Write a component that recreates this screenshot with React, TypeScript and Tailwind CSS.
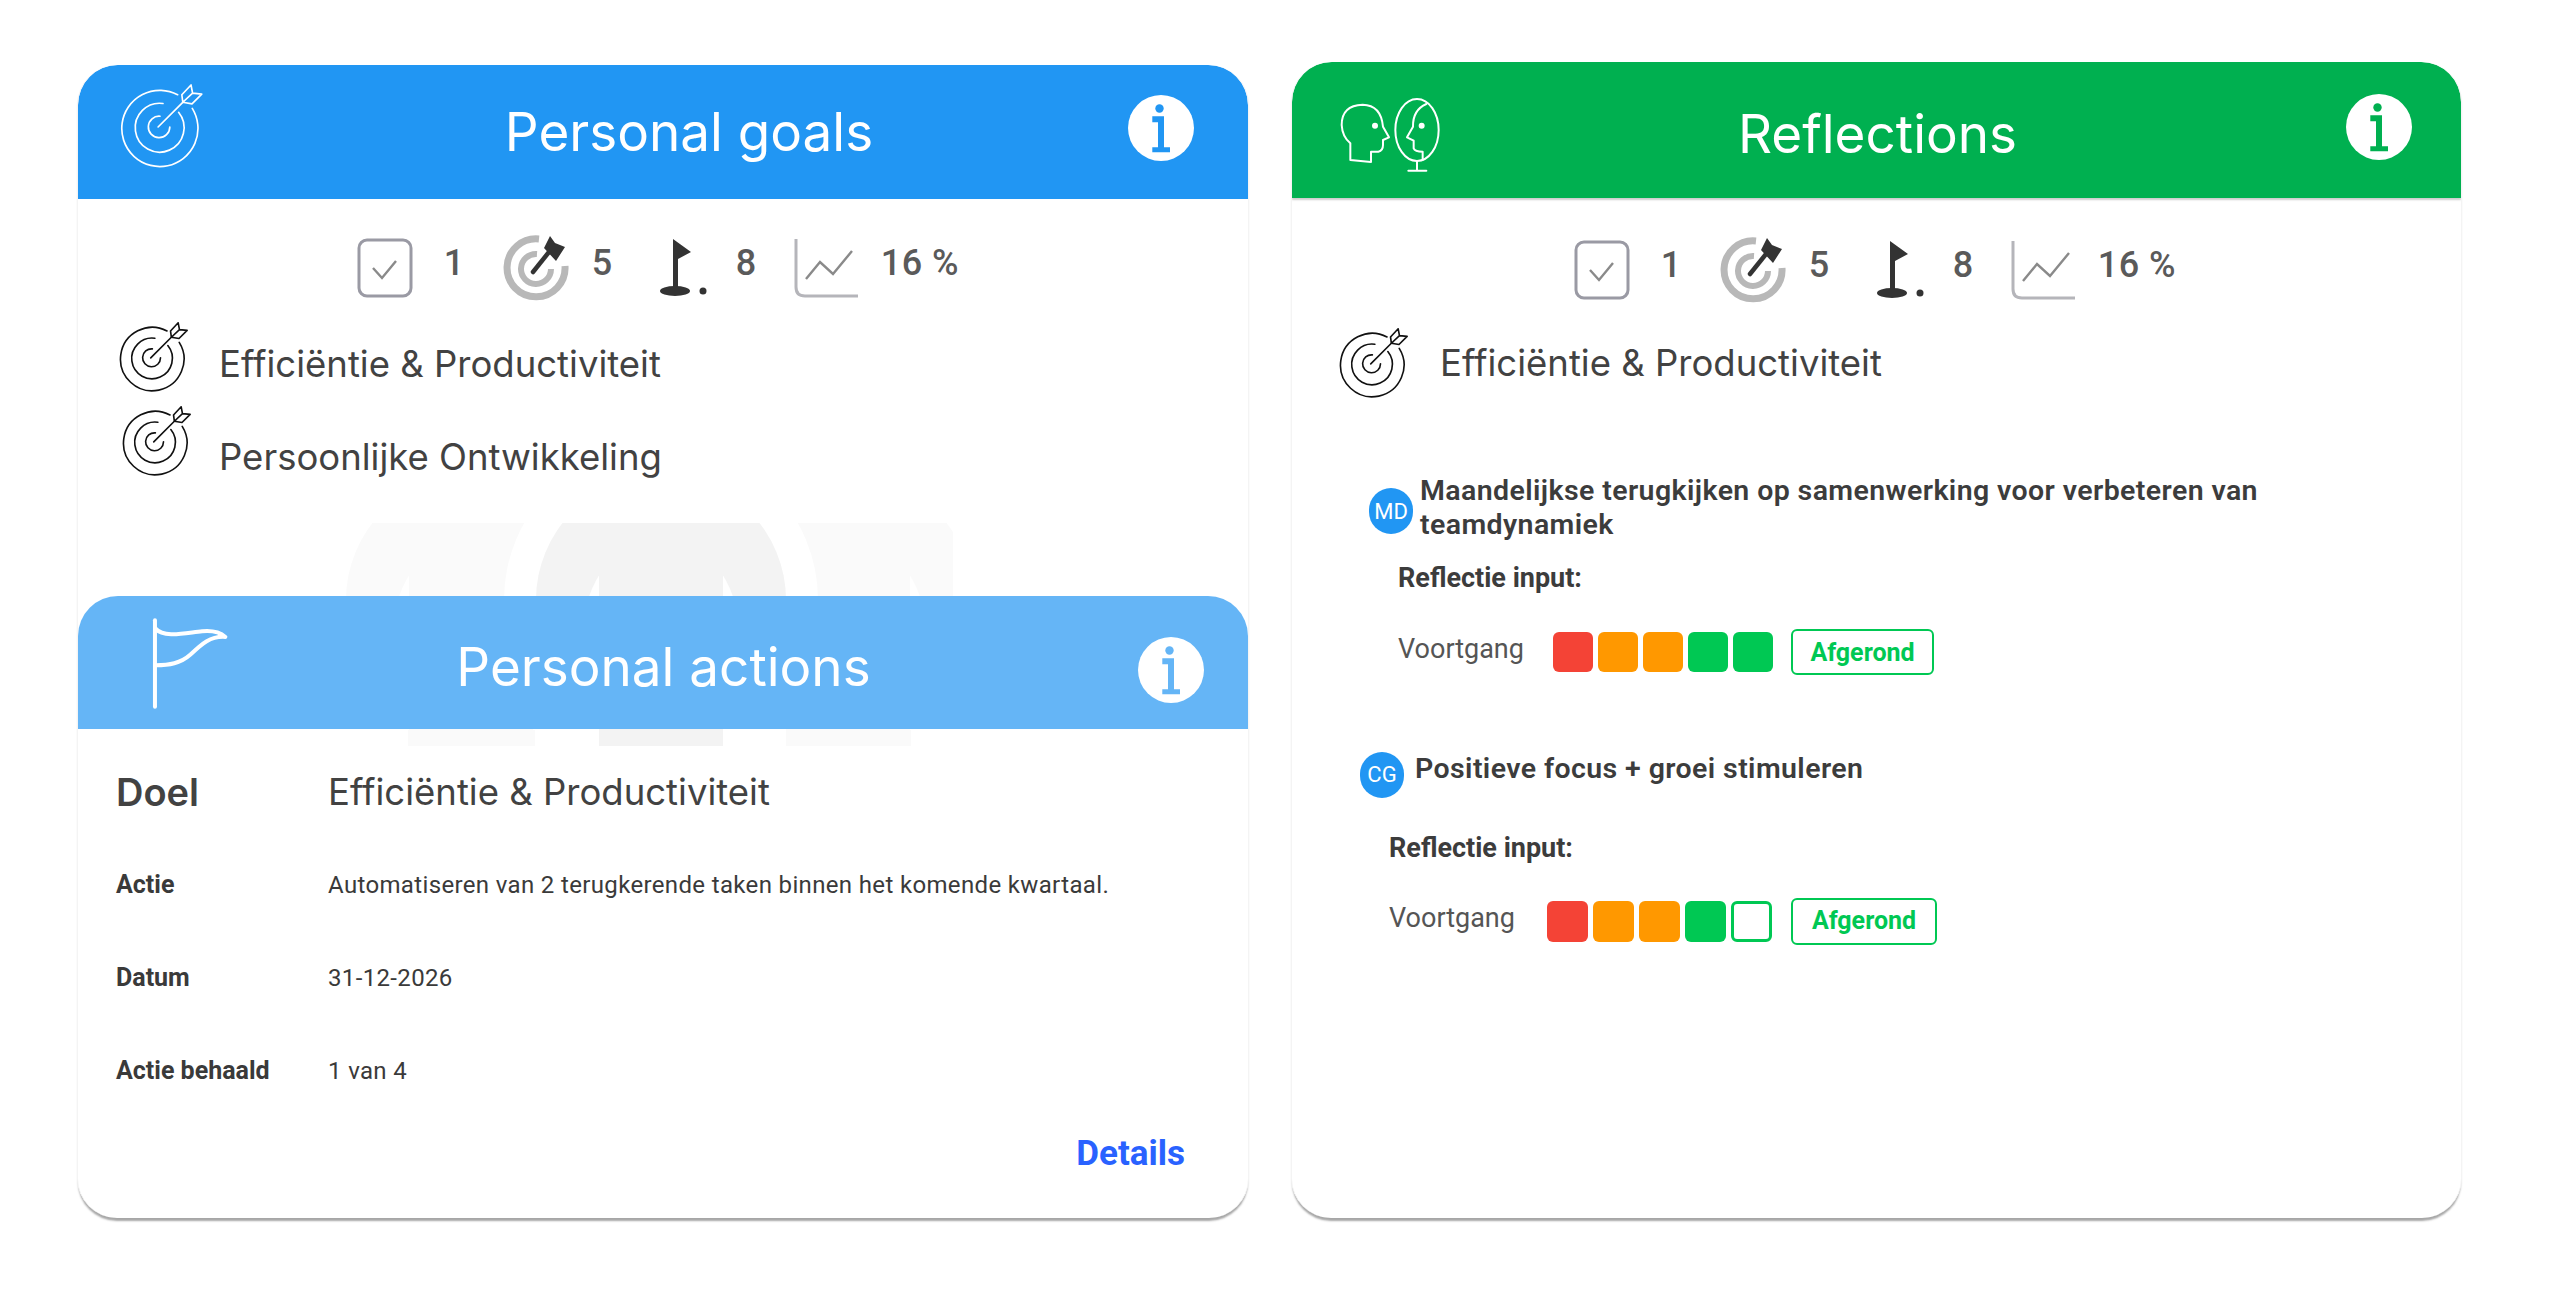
const bodyFont = { fontFamily: '"Inter", "Liberation Sans", sans-serif' };

function TargetIcon({ size = 84, color = 'currentColor', width = 1.6 }: { size?: number; color?: string; width?: number }) {
  return (
    <svg viewBox="0 0 86 86" width={size} height={size} fill="none" stroke={color} strokeWidth={width} strokeLinejoin="round" strokeLinecap="round" className="shrink-0">
      <path d="M59 11 A39 39 0 1 0 74 25" />
      <path d="M44 20 A25 25 0 1 0 60 29" />
      <path d="M41 33 A11 11 0 1 0 51 44" />
      <path d="M39 44 L64 19" />
      <path d="M64.3 18.7 L63.3 11 L72.7 1 L74.3 9.3 L83.7 10.3 L73.7 20.3 Z M64.3 18.7 L74.3 9.3" />
    </svg>
  );
}

function InfoIcon({ color }: { color: string }) {
  return (
    <svg viewBox="0 0 66 66" width={66} height={66} className="shrink-0">
      <circle cx="33" cy="33" r="33" fill="white" />
      <circle cx="31.5" cy="13.5" r="4.2" fill={color} />
      <path d="M24.3 21.3 H36 V52.3 H42 V57.3 H24.3 V52.3 H30 V27.3 H24.3 Z" fill={color} />
    </svg>
  );
}

function FlagIcon() {
  return (
    <svg viewBox="65 25 230 280" width={77} height={93} fill="none" stroke="white" strokeWidth={12} strokeLinecap="round" strokeLinejoin="round" className="shrink-0">
      <path d="M73 35 V295" />
      <path d="M75 60 C100 90 170 72 215 68 C245 65 270 72 285 85 C240 82 215 105 180 138 C150 165 115 170 75 170" />
    </svg>
  );
}

function HeadsIcon() {
  return (
    <svg viewBox="0 0 450 300" width={150} height={100} fill="none" stroke="white" strokeWidth={6} strokeLinejoin="round" strokeLinecap="round" className="shrink-0">
      <path d="M88 240 L150 246 L150 215 L172 215 Q186 212 186 195 L186 180 L204 172 L186 140 Q180 75 125 74 Q62 76 62 135 Q64 170 88 190 Z" />
      <circle cx="162" cy="137" r="6" fill="white" />
      <ellipse cx="288" cy="150" rx="65" ry="93" />
      <path d="M316 72 Q275 90 276 140 L258 172 L278 182 L278 205 Q282 215 305 215 L305 240" />
      <circle cx="302" cy="137" r="6" fill="white" />
      <path d="M288 243 V272 M262 272 H316" />
    </svg>
  );
}

function Watermark() {
  const shape = (cx: number, fill: string) => (
    <g>
      <ellipse cx={cx} cy="77" rx="125" ry="125" fill={fill} />
      <ellipse cx={cx} cy="110" rx="78" ry="95" fill="white" />
      <rect x={cx - 62} y="0" width="124" height="223" fill={fill} />
    </g>
  );
  return (
    <svg viewBox="0 0 623 223" width={623} height={223} className="absolute left-[252px] top-[458px]">
      {shape(141, '#fafafa')}
      {shape(518, '#fafafa')}
      <ellipse cx="331" cy="77" rx="157" ry="157" fill="white" />
      <rect x="78" y="207" width="127" height="16" fill="#fafafa" />
      <rect x="456" y="207" width="125" height="16" fill="#fafafa" />
      {shape(331, '#f3f3f3')}
    </svg>
  );
}

function StatsRow({ className }: { className: string }) {
  const num = 'text-[36px] leading-none font-medium text-[#5a5a5a] tracking-[0.5px]';
  return (
    <div className={`flex items-center justify-center h-[64px] ${className}`} style={{ fontFamily: '"Roboto", sans-serif' }}>
      <svg viewBox="0 0 58 62" width={58} height={62} fill="none" stroke="#9a9aa4" strokeWidth={3} className="shrink-0">
        <rect x="2" y="3" width="52" height="56" rx="8" />
        <path d="M16 31 L25 41 L39 24" stroke="#8a8a8a" strokeWidth={2.4} />
      </svg>
      <span className={`${num} ml-[29px] mb-[10px]`}>1</span>
      <svg viewBox="0 0 68 68" width={68} height={68} fill="none" className="shrink-0 ml-[38px]">
        <path d="M36 5 A29 29 0 1 0 62 32" stroke="#b8b8b8" strokeWidth={7} />
        <path d="M34 20 A15 15 0 1 0 48 35" stroke="#b8b8b8" strokeWidth={6} />
        <path d="M30 38 L46 18" stroke="#333" strokeWidth={4.5} strokeLinecap="round" />
        <path d="M41 14 L47 2 L52 9 L62 13 L53 27 Z" fill="#333" />
      </svg>
      <span className={`${num} ml-[21px] mb-[10px]`}>5</span>
      <svg viewBox="0 0 50 62" width={50} height={62} className="shrink-0 ml-[46px]">
        <path d="M14 2 L32 15 L19 22 V52 H14 Z" fill="#333" />
        <ellipse cx="16" cy="54" rx="15" ry="5" fill="#333" />
        <circle cx="44" cy="54" r="3.5" fill="#333" />
      </svg>
      <span className={`${num} ml-[27px] mb-[10px]`}>8</span>
      <svg viewBox="0 0 66 62" width={66} height={62} fill="none" className="shrink-0 ml-[37px]">
        <path d="M2 2 V50 Q2 59 11 59 H64" stroke="#b5b5ba" strokeWidth={3} />
        <path d="M12 42 L26 25 L39 37 L58 14" stroke="#8a8a8a" strokeWidth={2.4} />
      </svg>
      <span className={`${num} ml-[21px] mb-[10px]`}>16 %</span>
    </div>
  );
}

function Squares({ gap, size, last }: { gap: string; size: string; last: boolean }) {
  const colors = ['bg-[#f44336]', 'bg-[#ff9800]', 'bg-[#ff9800]', 'bg-[#00c853]'];
  return (
    <div className={`flex ${gap}`}>
      {colors.map((c, i) => (
        <div key={i} className={`${size} rounded-[6px] ${c}`} />
      ))}
      {last ? (
        <div className={`${size} rounded-[6px] bg-[#00c853]`} />
      ) : (
        <div className={`${size} rounded-[6px] bg-white border-[3px] border-[#00c853]`} />
      )}
    </div>
  );
}

function Avatar({ text, className }: { text: string; className: string }) {
  return (
    <div className={`w-[44px] h-[46px] rounded-full bg-[#2196f3] text-white flex items-center justify-center text-[22px] font-normal shrink-0 ${className}`}>
      {text}
    </div>
  );
}

function Badge({ className }: { className: string }) {
  return (
    <div className={`rounded-[6px] border-2 border-[#00c853] text-[#00c853] font-bold text-[25px] flex items-center justify-center ${className}`}>
      Afgerond
    </div>
  );
}

function ActionRow({ label, value, className }: { label: string; value: string; className: string }) {
  return (
    <div className={`flex items-center h-[30px] text-[#3a3a3a] ${className}`} style={{ fontFamily: '"Roboto", sans-serif' }}>
      <div className="w-[212px] font-bold text-[25px]">{label}</div>
      <div className="text-[24px] tracking-[0.35px]">{value}</div>
    </div>
  );
}

export default function App() {
  return (
    <div className="w-[2560px] h-[1310px] bg-white flex items-start pl-[77px] overflow-hidden" style={bodyFont}>
      {/* Left card */}
      <div className="relative w-[1172px] h-[1153px] mt-[65px] rounded-[40px] bg-white border-x border-[#f4f4f4] shadow-[0_4px_2px_-1px_rgba(0,0,0,0.35)] overflow-hidden flex flex-col">
        <div className="h-[134px] bg-[#2196f3] rounded-t-[40px] flex items-start pl-[42px] pr-[54px] pt-[19px] text-white shrink-0">
          <TargetIcon size={84} color="white" width={1.7} />
          <div className="flex-1 ml-[46px] text-center text-[53px] leading-[58px] mt-[19px]">Personal goals</div>
          <div className="mt-[11px]"><InfoIcon color="#2196f3" /></div>
        </div>

        <StatsRow className="mt-[37px] pr-[10px]" />

        <div className="flex items-center pl-[41px] mt-[20px] h-[74px] text-[#424242] text-[36.5px]">
          <TargetIcon size={70} color="#111" width={2} />
          <span className="ml-[30px] mt-[14px]">Efficiëntie &amp; Productiviteit</span>
        </div>
        <div className="flex items-start pl-[44px] mt-[12px] h-[74px] text-[#424242] text-[36.5px]">
          <TargetIcon size={70} color="#111" width={2} />
          <span className="ml-[27px] mt-[24px]">Persoonlijke Ontwikkeling</span>
        </div>

        {/* faint decoration behind the actions header */}
        <Watermark />

        <div className="relative h-[133px] bg-[#60b3f6]/97 rounded-t-[40px] mt-[116px] flex items-start pl-[74px] pr-[44px] pt-[21px] text-white shrink-0">
          <FlagIcon />
          <div className="flex-1 pr-[40px] text-center text-[53px] leading-[58px] mt-[21px]">Personal actions</div>
          <div className="mt-[20px]"><InfoIcon color="#64b5f6" /></div>
        </div>

        <div className="relative flex-1 pl-[38px]">
          <div className="flex items-center h-[50px] mt-[38px] text-[#424242] text-[36.5px]">
            <div className="w-[212px] font-semibold text-[38px]">Doel</div>
            <div>Efficiëntie &amp; Productiviteit</div>
          </div>
          <ActionRow className="mt-[53px]" label="Actie" value="Automatiseren van 2 terugkerende taken binnen het komende kwartaal." />
          <ActionRow className="mt-[63px]" label="Datum" value="31-12-2026" />
          <ActionRow className="mt-[63px]" label="Actie behaald" value="1 van 4" />
          <div className="flex justify-end pr-[63px] mt-[42px] text-[35px] font-bold text-[#2962ff]" style={{ fontFamily: '"Roboto", sans-serif' }}>
            Details
          </div>
        </div>
      </div>

      {/* Right card */}
      <div className="relative w-[1171px] h-[1156px] mt-[62px] ml-[42px] rounded-[40px] bg-white border-x border-[#f4f4f4] shadow-[0_4px_2px_-1px_rgba(0,0,0,0.35)] overflow-hidden flex flex-col">
        <div className="h-[136px] bg-[#00b050] rounded-t-[40px] flex items-start pl-[29px] pr-[49px] pt-[18px] text-white shadow-[0_2px_2px_rgba(0,0,0,0.2)] shrink-0">
          <HeadsIcon />
          <div className="flex-1 pr-[62px] text-center text-[53px] leading-[58px] mt-[25px]">Reflections</div>
          <div className="mt-[14px]"><InfoIcon color="#00b050" /></div>
        </div>

        <StatsRow className="mt-[40px] pr-[3px]" />

        <div className="flex items-center pl-[47px] mt-[26px] h-[70px] text-[#424242] text-[36.5px]">
          <TargetIcon size={70} color="#111" width={2} />
          <span className="ml-[31px] mt-[1px]">Efficiëntie &amp; Productiviteit</span>
        </div>

        <div className="text-[#3c3c3c]" style={{ fontFamily: '"Roboto", sans-serif' }}>
          <div className="flex items-start pl-[77px] mt-[76px]">
            <Avatar text="MD" className="mt-[14px]" />
            <div className="ml-[7px] w-[880px] text-[28.5px] leading-[34px] font-semibold tracking-[0.4px]">
              Maandelijkse terugkijken op samenwerking voor verbeteren van teamdynamiek
            </div>
          </div>
          <div className="pl-[106px] mt-[21px] text-[27px] leading-[30px] font-bold">Reflectie input:</div>
          <div className="flex items-center pl-[106px] mt-[36px]">
            <div className="w-[155px] text-[27px] text-[#555] mb-[6px]">Voortgang</div>
            <Squares gap="gap-[5px]" size="w-[40px] h-[40px]" last={true} />
            <Badge className="w-[143px] h-[46px] ml-[18px]" />
          </div>

          <div className="flex items-start pl-[68px] mt-[76px]">
            <Avatar text="CG" className="" />
            <div className="ml-[11px] text-[28.5px] leading-[34px] font-semibold tracking-[0.4px]">Positieve focus + groei stimuleren</div>
          </div>
          <div className="pl-[97px] mt-[35px] text-[27px] leading-[30px] font-bold">Reflectie input:</div>
          <div className="flex items-center pl-[97px] mt-[35px]">
            <div className="w-[158px] text-[27px] text-[#555] mb-[6px]">Voortgang</div>
            <Squares gap="gap-[5px]" size="w-[41px] h-[41px]" last={false} />
            <Badge className="w-[146px] h-[47px] ml-[19px]" />
          </div>
        </div>
      </div>
    </div>
  );
}
